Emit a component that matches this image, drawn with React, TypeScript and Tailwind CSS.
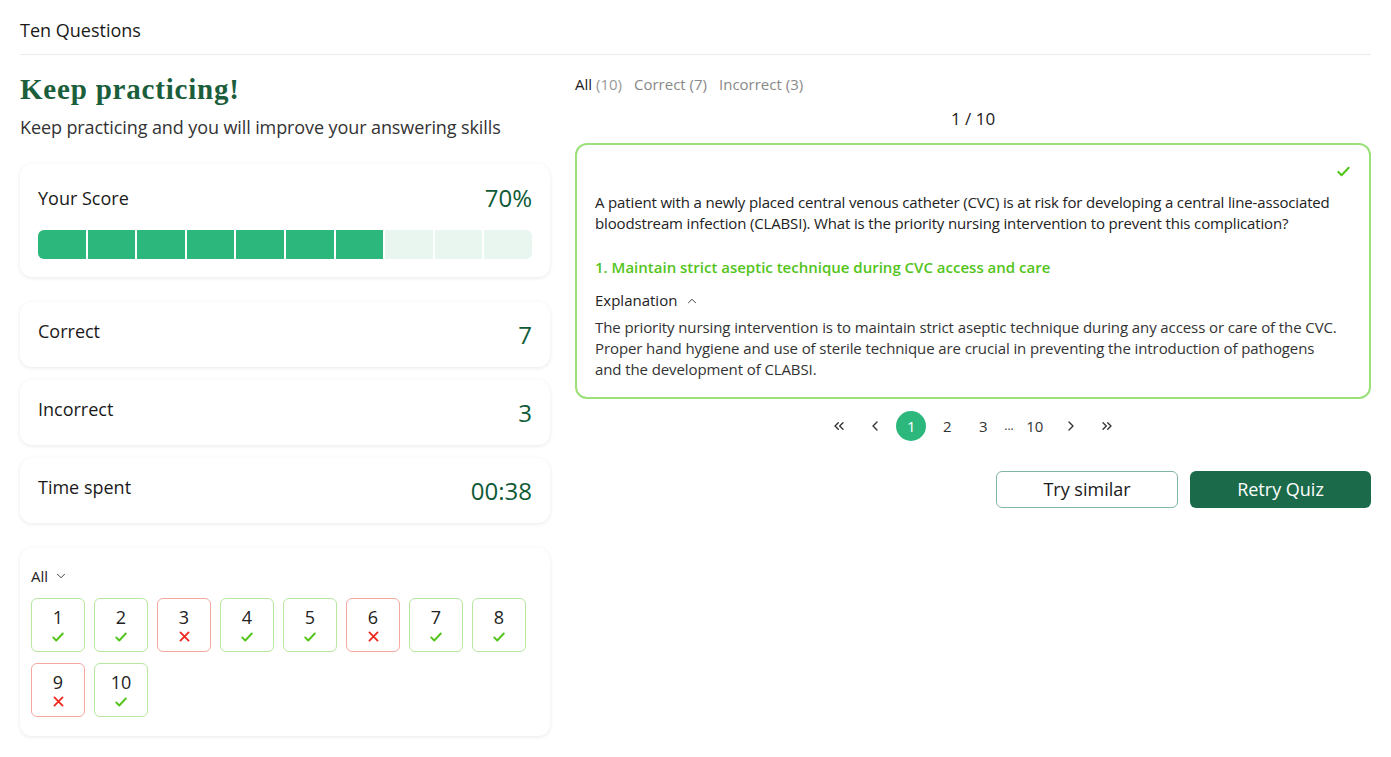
import { ChevronDown, ChevronUp, ChevronLeft, ChevronRight, ChevronsLeft, ChevronsRight } from "lucide-react";

const answers = [true, true, false, true, true, false, true, true, false, true];

function Check({ className = "" }: { className?: string }) {
  return (
    <svg viewBox="0 0 16 16" className={className} fill="none" stroke="currentColor" strokeWidth={2.2} strokeLinecap="round" strokeLinejoin="round">
      <path d="M2.5 8.5l3.5 3.5 7.5-8" />
    </svg>
  );
}

function Cross({ className = "" }: { className?: string }) {
  return (
    <svg viewBox="0 0 16 16" className={className} fill="none" stroke="currentColor" strokeWidth={2.2} strokeLinecap="round">
      <path d="M3 3l10 10M13 3L3 13" />
    </svg>
  );
}

function StatCard({ label, value }: { label: string; value: string }) {
  return (
    <div className="flex h-[65px] items-start justify-between rounded-xl bg-white px-[18px] pt-[16px] shadow-[0_1px_4px_rgba(0,0,0,0.09)]">
      <span className="text-[18px] leading-[26px] text-[#1a1a1a]">{label}</span>
      <span className="pt-[2px] text-[24px] leading-[30px] text-[#0f5a36]">{value}</span>
    </div>
  );
}

export default function App() {
  return (
    <div className="min-h-screen bg-white px-5 text-[#1a1a1a]" style={{ fontFamily: '"Open Sans", "Noto Sans", sans-serif' }}>
      <div className="flex h-[55px] items-center border-b border-[#ececec] pt-[6px]">
        <h1 className="text-[18px] font-medium">Ten Questions</h1>
      </div>

      <div className="flex gap-[25px]">
        {/* left column */}
        <div className="w-[530px] shrink-0">
          <h2
            className="mt-[16px] text-[29px] font-bold leading-[36px] tracking-[0.8px] text-[#1b5e3b]"
            style={{ fontFamily: '"Liberation Serif", "DejaVu Serif", serif' }}
          >
            Keep practicing!
          </h2>
          <p className="mt-[7px] text-[18px] leading-[26px] tracking-[-0.1px] text-[#333]">Keep practicing and you will improve your answering skills</p>

          <div className="mt-[24px] rounded-xl bg-white px-[18px] pb-[18px] pt-[19px] shadow-[0_1px_4px_rgba(0,0,0,0.09)]">
            <div className="flex items-center justify-between">
              <span className="text-[18px] leading-[26px]">Your Score</span>
              <span className="text-[24px] leading-[30px] text-[#0f5a36]">70%</span>
            </div>
            <div className="mt-[17px] flex h-[29px] gap-[2px] overflow-hidden rounded-md">
              {Array.from({ length: 10 }).map((_, i) => (
                <div key={i} className={`flex-1 ${i < 7 ? "bg-[#2cb87d]" : "bg-[#e8f6ef]"}`} />
              ))}
            </div>
          </div>

          <div className="mt-[25px] flex flex-col gap-[13px]">
            <StatCard label="Correct" value="7" />
            <StatCard label="Incorrect" value="3" />
            <StatCard label="Time spent" value="00:38" />
          </div>

          <div className="mt-[25px] rounded-xl bg-white px-[11px] pb-[19px] pt-[18px] shadow-[0_1px_4px_rgba(0,0,0,0.09)]">
            <div className="flex items-center gap-[6px] text-[15px] leading-[20px] text-[#222]">
              All <ChevronDown className="h-[14px] w-[14px]" strokeWidth={1.5} />
            </div>
            <div className="mt-[12px] flex flex-wrap gap-x-[9px] gap-y-[11px]">
              {answers.map((ok, i) => (
                <div
                  key={i}
                  className={`flex h-[54px] w-[54px] flex-col items-center rounded-md border pt-[7px] ${ok ? "border-[#b6e8a0]" : "border-[#f5a89e]"}`}
                >
                  <span className="text-[18px] leading-[22px] text-[#222]">{i + 1}</span>
                  {ok ? <Check className="mt-[2px] h-[14px] w-[14px] text-[#52c41a]" /> : <Cross className="mt-[2px] h-[13px] w-[13px] text-[#f0261c]" />}
                </div>
              ))}
            </div>
          </div>
        </div>

        {/* right column */}
        <div className="flex-1">
          <div className="mt-[19px] flex gap-[12px] text-[15px] leading-[20px]">
            <span>
              <span className="text-[#1a1a1a]">All</span> <span className="text-[#999]">(10)</span>
            </span>
            <span className="text-[#888]">Correct (7)</span>
            <span className="text-[#888]">Incorrect (3)</span>
          </div>
          <div className="mt-[13px] text-center text-[17px] leading-[24px]">1 / 10</div>

          <div className="mt-[12px] rounded-xl border-2 border-[#9be07a] px-[18px] pb-[17px] pt-[19px]">
            <div className="flex justify-end">
              <Check className="h-[15px] w-[15px] text-[#52c41a]" />
            </div>
            <p className="mt-[13px] text-[15px] leading-[21px] tracking-[-0.15px] text-[#222]">
              A patient with a newly placed central venous catheter (CVC) is at risk for developing a central line-associated bloodstream infection (CLABSI). What is the priority nursing intervention to prevent this complication?
            </p>
            <p className="mt-[23px] text-[15px] font-semibold leading-[21px] text-[#52c41a]">1. Maintain strict aseptic technique during CVC access and care</p>
            <div className="mt-[12px] flex items-center gap-[8px] text-[15px] leading-[21px] text-[#222]">
              Explanation <ChevronUp className="h-[14px] w-[14px]" strokeWidth={1.5} />
            </div>
            <p className="mt-[6px] pr-[14px] text-[15px] leading-[21px] tracking-[-0.1px] text-[#333]">
              The priority nursing intervention is to maintain strict aseptic technique during any access or care of the CVC. Proper hand hygiene and use of sterile technique are crucial in preventing the introduction of pathogens and the development of CLABSI.
            </p>
          </div>

          <div className="mt-[12px] flex items-center justify-center gap-[6px] text-[15px] text-[#333]">
            <span className="flex h-[30px] w-[30px] items-center justify-center"><ChevronsLeft className="h-[16px] w-[16px]" /></span>
            <span className="flex h-[30px] w-[30px] items-center justify-center"><ChevronLeft className="h-[16px] w-[16px]" /></span>
            <span className="flex h-[30px] w-[30px] items-center justify-center rounded-full bg-[#2cb87d] text-white">1</span>
            <span className="flex h-[30px] w-[30px] items-center justify-center">2</span>
            <span className="flex h-[30px] w-[30px] items-center justify-center">3</span>
            <span className="text-[12px]">...</span>
            <span className="flex h-[30px] w-[30px] items-center justify-center">10</span>
            <span className="flex h-[30px] w-[30px] items-center justify-center"><ChevronRight className="h-[16px] w-[16px]" /></span>
            <span className="flex h-[30px] w-[30px] items-center justify-center"><ChevronsRight className="h-[16px] w-[16px]" /></span>
          </div>

          <div className="mt-[30px] flex justify-end gap-[12px]">
            <button className="h-[37px] w-[182px] rounded-md border border-[#7fb8a0] bg-white text-[18px] font-medium text-[#1a1a1a]">Try similar</button>
            <button className="h-[37px] w-[181px] rounded-md bg-[#1b6b4a] text-[18px] font-medium text-white">Retry Quiz</button>
          </div>
        </div>
      </div>
    </div>
  );
}
